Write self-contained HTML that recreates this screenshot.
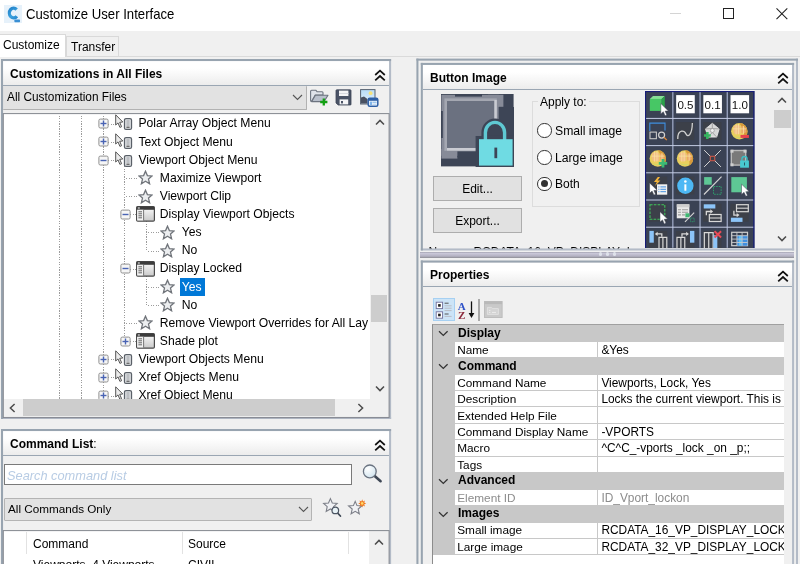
<!DOCTYPE html>
<html><head><meta charset="utf-8"><title>Customize User Interface</title>
<style>
*{box-sizing:border-box;margin:0;padding:0}
html,body{width:800px;height:564px;overflow:hidden;background:#f0f0f0}
body{position:relative;font:12px "Liberation Sans",sans-serif;color:#000}
.a{position:absolute;white-space:pre}
.t{position:absolute;white-space:pre;line-height:14px;height:14px}
.b{font-weight:bold}
.panel{position:absolute;background:#f0f0f0}
.hdr{position:absolute;left:2px;right:2px;top:2px;height:24.8px;background:linear-gradient(#ffffff 30%,#ececec);border-bottom:1px solid #9aa6b3}
.combo{position:absolute;background:#e2e2e2;border:1px solid #b4b4b4;border-radius:1px}
.white{position:absolute;background:#fff}
.sb{position:absolute;background:#f0f0f0}
.thumb{position:absolute;background:#cdcdcd}
.hd{height:1px;background:repeating-linear-gradient(90deg,#9c9c9c 0 0.82px,transparent 0.82px 1.64px)}
.vd{width:1px;background:repeating-linear-gradient(180deg,#9c9c9c 0 0.82px,transparent 0.82px 1.64px)}
.chev{position:absolute}
.radio{width:14.4px;height:14.4px;border-radius:50%;border:1px solid #333;background:#fff}
.radio i{position:absolute;left:2.7px;top:2.7px;width:7px;height:7px;border-radius:50%;background:#333}
</style></head><body>
<!-- title bar -->
<div class="a" style="left:0;top:0;width:800px;height:31px;background:#fff"></div>
<div class="t" style="left:26px;top:6.1px;font-size:14.3px;line-height:16px;height:16px;color:#000;transform-origin:0 0;transform:scaleX(0.92)">Customize User Interface</div>
<!-- app icon -->
<svg class="a" style="left:4px;top:4.5px" width="18" height="18" viewBox="0 0 18 18">
<defs><linearGradient id="cg" gradientUnits="userSpaceOnUse" x1="3" y1="1" x2="14" y2="15"><stop offset="0" stop-color="#1a78c2"/><stop offset="0.6" stop-color="#3aa0de"/><stop offset="1" stop-color="#1e7fc8"/></linearGradient></defs>
<rect width="18" height="18" fill="#e6f1fa"/>
<path d="M12.6 4.6 A4.2 4.9 0 1 0 12.8 11.2" stroke="url(#cg)" stroke-width="3.3" fill="none"/>
<rect x="10.4" y="14.6" width="5.6" height="2.6" rx="0.6" fill="#3a8fd4"/>
</svg>
<!-- window controls -->
<div class="a" style="left:670px;top:12.7px;width:11px;height:1px;background:#d4d4d4"></div>
<div class="a" style="left:723px;top:8.2px;width:10.8px;height:10.6px;border:1px solid #222"></div>
<svg class="a" style="left:776px;top:8px" width="12" height="12" viewBox="0 0 12 12"><path d="M0.5 0.4 L11.3 11.2 M11.3 0.4 L0.5 11.2" stroke="#222" stroke-width="1.05"/></svg>
<!-- tabs -->
<div class="a" style="left:0;top:56px;width:800px;height:1px;background:#dadada"></div>
<div class="a" style="left:66px;top:36px;width:53px;height:20px;background:#f0f0f0;border:1px solid #d9d9d9;border-bottom:none"></div>
<div class="a" style="left:0;top:34px;width:66px;height:23px;background:#fff;border:1px solid #d9d9d9;border-bottom:none;border-left:none"></div>
<div class="t" style="left:3px;top:38px">Customize</div>
<div class="t" style="left:71px;top:40px">Transfer</div>

<!-- LEFT PANEL 1 -->
<div class="panel" id="p1" style="left:1px;top:59px;width:390.1px;height:360px">
  <div class="hdr"></div>
</div>
<div class="t b" style="left:10px;top:67px">Customizations in All Files</div>
<div class="combo" style="left:3.4px;top:86px;width:303.4px;height:23.6px;border-left:none;border-top:none;border-color:#b2b2b2"></div>
<div class="t" style="left:7px;top:90px;font-size:11.85px">All Customization Files</div>
<div class="white" id="tree" style="left:4px;top:114px;width:366.4px;height:284.6px;overflow:hidden"><div class="a" style="left:-4px;top:-114px;width:800px;height:564px">
<div class="a vd" style="left:59.1px;top:113.0px;height:286.0px"></div>
<div class="a vd" style="left:81.0px;top:113.0px;height:286.0px"></div>
<div class="a vd" style="left:102.7px;top:113.0px;height:286.0px"></div>
<div class="a vd" style="left:124.1px;top:165.9px;height:175.3px"></div>
<div class="a vd" style="left:146.1px;top:221.2px;height:29.3px"></div>
<div class="a vd" style="left:146.1px;top:275.6px;height:29.3px"></div>
<div class="a hd" style="left:108.2px;top:123.6px;width:6.0px"></div>
<svg class="a" style="left:114.8px;top:114.4px" width="19" height="17" viewBox="0 0 19 17"><path d="M0.7 0.8 L0.7 11 L3 8.9 L4.9 13.4 L6.6 12.7 L4.7 8.3 L7.8 8 Z" fill="#ececec" stroke="#555" stroke-width="1" stroke-linejoin="round"/><rect x="9.5" y="4.6" width="7" height="10.8" rx="1.5" fill="#e6e8ea" stroke="#5a6068" stroke-width="1.3"/><path d="M11.4 7h3.2M11.4 9h3.2M11.4 11h3.2" stroke="#7d838b" stroke-width="0.8"/><path d="M11.4 13.2h3.2" stroke="#444" stroke-width="1.1"/></svg>
<svg class="a" style="left:97.7px;top:118.2px" width="11" height="11" viewBox="0 0 11 11"><rect x="0.9" y="1.1" width="9.2" height="8.9" rx="1.4" fill="#f6f6f6" stroke="#909090" stroke-width="1"/><path d="M2.5 5.5h6" stroke="#4a64b4" stroke-width="1.4"/><path d="M5.5 2.5v6" stroke="#4a64b4" stroke-width="1.4"/></svg>
<div class="t" style="left:138.4px;top:116.4px;font-size:12.15px">Polar Array Object Menu</div>
<div class="a hd" style="left:108.2px;top:141.7px;width:6.0px"></div>
<svg class="a" style="left:114.8px;top:132.5px" width="19" height="17" viewBox="0 0 19 17"><path d="M0.7 0.8 L0.7 11 L3 8.9 L4.9 13.4 L6.6 12.7 L4.7 8.3 L7.8 8 Z" fill="#ececec" stroke="#555" stroke-width="1" stroke-linejoin="round"/><rect x="9.5" y="4.6" width="7" height="10.8" rx="1.5" fill="#e6e8ea" stroke="#5a6068" stroke-width="1.3"/><path d="M11.4 7h3.2M11.4 9h3.2M11.4 11h3.2" stroke="#7d838b" stroke-width="0.8"/><path d="M11.4 13.2h3.2" stroke="#444" stroke-width="1.1"/></svg>
<svg class="a" style="left:97.7px;top:136.3px" width="11" height="11" viewBox="0 0 11 11"><rect x="0.9" y="1.1" width="9.2" height="8.9" rx="1.4" fill="#f6f6f6" stroke="#909090" stroke-width="1"/><path d="M2.5 5.5h6" stroke="#4a64b4" stroke-width="1.4"/><path d="M5.5 2.5v6" stroke="#4a64b4" stroke-width="1.4"/></svg>
<div class="t" style="left:138.4px;top:134.5px;font-size:12.15px">Text Object Menu</div>
<div class="a hd" style="left:108.2px;top:159.9px;width:6.0px"></div>
<svg class="a" style="left:114.8px;top:150.7px" width="19" height="17" viewBox="0 0 19 17"><path d="M0.7 0.8 L0.7 11 L3 8.9 L4.9 13.4 L6.6 12.7 L4.7 8.3 L7.8 8 Z" fill="#ececec" stroke="#555" stroke-width="1" stroke-linejoin="round"/><rect x="9.5" y="4.6" width="7" height="10.8" rx="1.5" fill="#e6e8ea" stroke="#5a6068" stroke-width="1.3"/><path d="M11.4 7h3.2M11.4 9h3.2M11.4 11h3.2" stroke="#7d838b" stroke-width="0.8"/><path d="M11.4 13.2h3.2" stroke="#444" stroke-width="1.1"/></svg>
<svg class="a" style="left:97.7px;top:154.5px" width="11" height="11" viewBox="0 0 11 11"><rect x="0.9" y="1.1" width="9.2" height="8.9" rx="1.4" fill="#f6f6f6" stroke="#909090" stroke-width="1"/><path d="M2.5 5.5h6" stroke="#4a64b4" stroke-width="1.4"/></svg>
<div class="t" style="left:138.4px;top:152.7px;font-size:12.15px">Viewport Object Menu</div>
<div class="a hd" style="left:125.6px;top:178.0px;width:11.0px"></div>
<svg class="a" style="left:138.2px;top:170.4px" width="15" height="15" viewBox="0 0 15 15"><path d="M7.5 1.2 L9.4 5.6 L14.1 6 L10.5 9.1 L11.6 13.8 L7.5 11.3 L3.4 13.8 L4.5 9.1 L0.9 6 L5.6 5.6 Z" fill="#eceef0" stroke="#70747a" stroke-width="1.3" stroke-linejoin="miter"/></svg>
<div class="t" style="left:159.8px;top:170.8px;font-size:12.15px">Maximize Viewport</div>
<div class="a hd" style="left:125.6px;top:196.1px;width:11.0px"></div>
<svg class="a" style="left:138.2px;top:188.5px" width="15" height="15" viewBox="0 0 15 15"><path d="M7.5 1.2 L9.4 5.6 L14.1 6 L10.5 9.1 L11.6 13.8 L7.5 11.3 L3.4 13.8 L4.5 9.1 L0.9 6 L5.6 5.6 Z" fill="#eceef0" stroke="#70747a" stroke-width="1.3" stroke-linejoin="miter"/></svg>
<div class="t" style="left:159.8px;top:188.9px;font-size:12.15px">Viewport Clip</div>
<div class="a hd" style="left:129.6px;top:214.2px;width:7.0px"></div>
<svg class="a" style="left:136.2px;top:206.2px" width="19" height="16" viewBox="0 0 19 16"><defs><linearGradient id="sg5" x1="0" y1="0" x2="0" y2="1"><stop offset="0" stop-color="#fdfdfd"/><stop offset="1" stop-color="#c9c9c9"/></linearGradient></defs><rect x="0.6" y="0.6" width="17.8" height="14.6" rx="1.2" fill="url(#sg5)" stroke="#4a4a4a" stroke-width="1.2"/><rect x="0.6" y="0.6" width="17.8" height="3.2" fill="#3c3c3c"/><rect x="1.2" y="3.8" width="6.2" height="10.6" fill="#f2f2f2"/><path d="M7.6 3.8v10.8" stroke="#6a6a6a" stroke-width="0.9"/><path d="M2.4 5.8h3.6M2.4 7.8h3.6M2.4 9.8h3.6M2.4 11.8h3.6" stroke="#555" stroke-width="0.9"/><rect x="1.8" y="1.4" width="2" height="1.2" fill="#ddd"/></svg>
<svg class="a" style="left:119.5px;top:208.8px" width="11" height="11" viewBox="0 0 11 11"><rect x="0.9" y="1.1" width="9.2" height="8.9" rx="1.4" fill="#f6f6f6" stroke="#909090" stroke-width="1"/><path d="M2.5 5.5h6" stroke="#4a64b4" stroke-width="1.4"/></svg>
<div class="t" style="left:159.8px;top:207.1px;font-size:12.15px">Display Viewport Objects</div>
<div class="a hd" style="left:147.6px;top:232.4px;width:11.0px"></div>
<svg class="a" style="left:160.2px;top:224.8px" width="15" height="15" viewBox="0 0 15 15"><path d="M7.5 1.2 L9.4 5.6 L14.1 6 L10.5 9.1 L11.6 13.8 L7.5 11.3 L3.4 13.8 L4.5 9.1 L0.9 6 L5.6 5.6 Z" fill="#eceef0" stroke="#70747a" stroke-width="1.3" stroke-linejoin="miter"/></svg>
<div class="t" style="left:181.8px;top:225.2px;font-size:12.15px">Yes</div>
<div class="a hd" style="left:147.6px;top:250.5px;width:11.0px"></div>
<svg class="a" style="left:160.2px;top:242.9px" width="15" height="15" viewBox="0 0 15 15"><path d="M7.5 1.2 L9.4 5.6 L14.1 6 L10.5 9.1 L11.6 13.8 L7.5 11.3 L3.4 13.8 L4.5 9.1 L0.9 6 L5.6 5.6 Z" fill="#eceef0" stroke="#70747a" stroke-width="1.3" stroke-linejoin="miter"/></svg>
<div class="t" style="left:181.8px;top:243.3px;font-size:12.15px">No</div>
<div class="a hd" style="left:129.6px;top:268.6px;width:7.0px"></div>
<svg class="a" style="left:136.2px;top:260.6px" width="19" height="16" viewBox="0 0 19 16"><defs><linearGradient id="sg8" x1="0" y1="0" x2="0" y2="1"><stop offset="0" stop-color="#fdfdfd"/><stop offset="1" stop-color="#c9c9c9"/></linearGradient></defs><rect x="0.6" y="0.6" width="17.8" height="14.6" rx="1.2" fill="url(#sg8)" stroke="#4a4a4a" stroke-width="1.2"/><rect x="0.6" y="0.6" width="17.8" height="3.2" fill="#3c3c3c"/><rect x="1.2" y="3.8" width="6.2" height="10.6" fill="#f2f2f2"/><path d="M7.6 3.8v10.8" stroke="#6a6a6a" stroke-width="0.9"/><path d="M2.4 5.8h3.6M2.4 7.8h3.6M2.4 9.8h3.6M2.4 11.8h3.6" stroke="#555" stroke-width="0.9"/><rect x="1.8" y="1.4" width="2" height="1.2" fill="#ddd"/></svg>
<svg class="a" style="left:119.5px;top:263.2px" width="11" height="11" viewBox="0 0 11 11"><rect x="0.9" y="1.1" width="9.2" height="8.9" rx="1.4" fill="#f6f6f6" stroke="#909090" stroke-width="1"/><path d="M2.5 5.5h6" stroke="#4a64b4" stroke-width="1.4"/></svg>
<div class="t" style="left:159.8px;top:261.4px;font-size:12.15px">Display Locked</div>
<div class="a hd" style="left:147.6px;top:286.8px;width:11.0px"></div>
<svg class="a" style="left:160.2px;top:279.2px" width="15" height="15" viewBox="0 0 15 15"><path d="M7.5 1.2 L9.4 5.6 L14.1 6 L10.5 9.1 L11.6 13.8 L7.5 11.3 L3.4 13.8 L4.5 9.1 L0.9 6 L5.6 5.6 Z" fill="#eceef0" stroke="#70747a" stroke-width="1.3" stroke-linejoin="miter"/></svg>
<div class="a" style="left:179.9px;top:277.5px;width:25.2px;height:18.6px;background:#0078d7"></div>
<div class="t" style="left:181.8px;top:279.6px;color:#fff;font-size:12.15px">Yes</div>
<div class="a hd" style="left:147.6px;top:304.9px;width:11.0px"></div>
<svg class="a" style="left:160.2px;top:297.3px" width="15" height="15" viewBox="0 0 15 15"><path d="M7.5 1.2 L9.4 5.6 L14.1 6 L10.5 9.1 L11.6 13.8 L7.5 11.3 L3.4 13.8 L4.5 9.1 L0.9 6 L5.6 5.6 Z" fill="#eceef0" stroke="#70747a" stroke-width="1.3" stroke-linejoin="miter"/></svg>
<div class="t" style="left:181.8px;top:297.7px;font-size:12.15px">No</div>
<div class="a hd" style="left:125.6px;top:323.0px;width:11.0px"></div>
<svg class="a" style="left:138.2px;top:315.4px" width="15" height="15" viewBox="0 0 15 15"><path d="M7.5 1.2 L9.4 5.6 L14.1 6 L10.5 9.1 L11.6 13.8 L7.5 11.3 L3.4 13.8 L4.5 9.1 L0.9 6 L5.6 5.6 Z" fill="#eceef0" stroke="#70747a" stroke-width="1.3" stroke-linejoin="miter"/></svg>
<div class="t" style="left:159.8px;top:315.8px;font-size:12.15px">Remove Viewport Overrides for All Lay</div>
<div class="a hd" style="left:129.6px;top:341.2px;width:7.0px"></div>
<svg class="a" style="left:136.2px;top:333.2px" width="19" height="16" viewBox="0 0 19 16"><defs><linearGradient id="sg12" x1="0" y1="0" x2="0" y2="1"><stop offset="0" stop-color="#fdfdfd"/><stop offset="1" stop-color="#c9c9c9"/></linearGradient></defs><rect x="0.6" y="0.6" width="17.8" height="14.6" rx="1.2" fill="url(#sg12)" stroke="#4a4a4a" stroke-width="1.2"/><rect x="0.6" y="0.6" width="17.8" height="3.2" fill="#3c3c3c"/><rect x="1.2" y="3.8" width="6.2" height="10.6" fill="#f2f2f2"/><path d="M7.6 3.8v10.8" stroke="#6a6a6a" stroke-width="0.9"/><path d="M2.4 5.8h3.6M2.4 7.8h3.6M2.4 9.8h3.6M2.4 11.8h3.6" stroke="#555" stroke-width="0.9"/><rect x="1.8" y="1.4" width="2" height="1.2" fill="#ddd"/></svg>
<svg class="a" style="left:119.5px;top:335.8px" width="11" height="11" viewBox="0 0 11 11"><rect x="0.9" y="1.1" width="9.2" height="8.9" rx="1.4" fill="#f6f6f6" stroke="#909090" stroke-width="1"/><path d="M2.5 5.5h6" stroke="#4a64b4" stroke-width="1.4"/><path d="M5.5 2.5v6" stroke="#4a64b4" stroke-width="1.4"/></svg>
<div class="t" style="left:159.8px;top:334.0px;font-size:12.15px">Shade plot</div>
<div class="a hd" style="left:108.2px;top:359.3px;width:6.0px"></div>
<svg class="a" style="left:114.8px;top:350.1px" width="19" height="17" viewBox="0 0 19 17"><path d="M0.7 0.8 L0.7 11 L3 8.9 L4.9 13.4 L6.6 12.7 L4.7 8.3 L7.8 8 Z" fill="#ececec" stroke="#555" stroke-width="1" stroke-linejoin="round"/><rect x="9.5" y="4.6" width="7" height="10.8" rx="1.5" fill="#e6e8ea" stroke="#5a6068" stroke-width="1.3"/><path d="M11.4 7h3.2M11.4 9h3.2M11.4 11h3.2" stroke="#7d838b" stroke-width="0.8"/><path d="M11.4 13.2h3.2" stroke="#444" stroke-width="1.1"/></svg>
<svg class="a" style="left:97.7px;top:353.9px" width="11" height="11" viewBox="0 0 11 11"><rect x="0.9" y="1.1" width="9.2" height="8.9" rx="1.4" fill="#f6f6f6" stroke="#909090" stroke-width="1"/><path d="M2.5 5.5h6" stroke="#4a64b4" stroke-width="1.4"/><path d="M5.5 2.5v6" stroke="#4a64b4" stroke-width="1.4"/></svg>
<div class="t" style="left:138.4px;top:352.1px;font-size:12.15px">Viewport Objects Menu</div>
<div class="a hd" style="left:108.2px;top:377.4px;width:6.0px"></div>
<svg class="a" style="left:114.8px;top:368.2px" width="19" height="17" viewBox="0 0 19 17"><path d="M0.7 0.8 L0.7 11 L3 8.9 L4.9 13.4 L6.6 12.7 L4.7 8.3 L7.8 8 Z" fill="#ececec" stroke="#555" stroke-width="1" stroke-linejoin="round"/><rect x="9.5" y="4.6" width="7" height="10.8" rx="1.5" fill="#e6e8ea" stroke="#5a6068" stroke-width="1.3"/><path d="M11.4 7h3.2M11.4 9h3.2M11.4 11h3.2" stroke="#7d838b" stroke-width="0.8"/><path d="M11.4 13.2h3.2" stroke="#444" stroke-width="1.1"/></svg>
<svg class="a" style="left:97.7px;top:372.0px" width="11" height="11" viewBox="0 0 11 11"><rect x="0.9" y="1.1" width="9.2" height="8.9" rx="1.4" fill="#f6f6f6" stroke="#909090" stroke-width="1"/><path d="M2.5 5.5h6" stroke="#4a64b4" stroke-width="1.4"/><path d="M5.5 2.5v6" stroke="#4a64b4" stroke-width="1.4"/></svg>
<div class="t" style="left:138.4px;top:370.2px;font-size:12.15px">Xref Objects Menu</div>
<div class="a hd" style="left:108.2px;top:395.5px;width:6.0px"></div>
<svg class="a" style="left:114.8px;top:386.3px" width="19" height="17" viewBox="0 0 19 17"><path d="M0.7 0.8 L0.7 11 L3 8.9 L4.9 13.4 L6.6 12.7 L4.7 8.3 L7.8 8 Z" fill="#ececec" stroke="#555" stroke-width="1" stroke-linejoin="round"/><rect x="9.5" y="4.6" width="7" height="10.8" rx="1.5" fill="#e6e8ea" stroke="#5a6068" stroke-width="1.3"/><path d="M11.4 7h3.2M11.4 9h3.2M11.4 11h3.2" stroke="#7d838b" stroke-width="0.8"/><path d="M11.4 13.2h3.2" stroke="#444" stroke-width="1.1"/></svg>
<svg class="a" style="left:97.7px;top:390.1px" width="11" height="11" viewBox="0 0 11 11"><rect x="0.9" y="1.1" width="9.2" height="8.9" rx="1.4" fill="#f6f6f6" stroke="#909090" stroke-width="1"/><path d="M2.5 5.5h6" stroke="#4a64b4" stroke-width="1.4"/><path d="M5.5 2.5v6" stroke="#4a64b4" stroke-width="1.4"/></svg>
<div class="t" style="left:138.4px;top:388.3px;font-size:12.15px">Xref Object Menu</div>
</div></div>
<div class="sb" style="left:370.4px;top:114px;width:18.2px;height:284.6px"></div>
<div class="sb" style="left:4px;top:398.6px;width:384.6px;height:18.4px"></div>
<div class="thumb" style="left:23px;top:399.4px;width:311.8px;height:16.6px"></div>
<div class="thumb" style="left:371.2px;top:294.9px;width:16.2px;height:26.9px"></div>

<!-- LEFT PANEL 2 -->
<div class="panel" id="p2" style="left:1px;top:429px;width:390.1px;height:140px">
  <div class="hdr"></div>
</div>
<div class="t b" style="left:10px;top:437px">Command List<span style="font-weight:normal">:</span></div>
<div class="white" style="left:4px;top:464px;width:348px;height:21px;border:1px solid #7a7a7a"></div>
<div class="t" style="left:7px;top:469px;font-style:italic;color:#b8cce4;font-size:12.8px">Search command list</div>
<div class="combo" style="left:4px;top:498px;width:308px;height:23px"></div>
<div class="t" style="left:8px;top:502.3px;font-size:11.7px">All Commands Only</div>
<div class="white" style="left:4px;top:531px;width:365px;height:40px"></div>
<div class="sb" style="left:369px;top:531px;width:19.6px;height:40px"></div>
<div class="t" style="left:33px;top:537px">Command</div>
<div class="t" style="left:188px;top:537px">Source</div>
<div class="t" style="left:33px;top:557.6px">Viewports, 4 Viewports</div>
<div class="t" style="left:188px;top:557.6px">CIVIL</div>


<!-- header chevrons -->
<svg class="a" style="left:374px;top:68.5px" width="12" height="13" viewBox="0 0 12 13"><path d="M1.2 6 L6 1.6 L10.8 6 M1.2 11.4 L6 7 L10.8 11.4" fill="none" stroke="#111" stroke-width="1.7"/></svg>
<svg class="a" style="left:374px;top:438.5px" width="12" height="13" viewBox="0 0 12 13"><path d="M1.2 6 L6 1.6 L10.8 6 M1.2 11.4 L6 7 L10.8 11.4" fill="none" stroke="#111" stroke-width="1.7"/></svg>
<!-- combo arrows -->
<svg class="a" style="left:292px;top:94px" width="11" height="7" viewBox="0 0 11 7"><path d="M1 1 L5.5 5.5 L10 1" fill="none" stroke="#555" stroke-width="1.1"/></svg>
<svg class="a" style="left:297.5px;top:505.5px" width="11" height="7" viewBox="0 0 11 7"><path d="M1 1 L5.5 5.5 L10 1" fill="none" stroke="#555" stroke-width="1.1"/></svg>
<!-- open folder + -->
<svg class="a" style="left:309px;top:88px" width="21" height="20" viewBox="0 0 21 20">
<path d="M1.6 3.2 Q1.6 2.2 2.6 2.2 L6.8 2.2 L8.2 3.8 L13.2 3.8 Q14 3.8 14 4.8 L14 7 L6.2 7 L2.6 13.4 Q1.6 13.4 1.6 12.4 Z" fill="#dfe3ea" stroke="#6d7480" stroke-width="1.1" stroke-linejoin="round"/>
<path d="M6.4 7.2 L19 7.2 L15 13.6 L2.6 13.6 Z" fill="#b9c0cc" stroke="#6d7480" stroke-width="1.1" stroke-linejoin="round"/>
<path d="M14.8 10.4v7.2M11.2 14h7.2" stroke="#12a012" stroke-width="2.3"/>
</svg>
<!-- save -->
<svg class="a" style="left:335px;top:89.2px" width="17" height="17" viewBox="0 0 17 17">
<path d="M1 1.6 Q1 0.8 1.8 0.8 L15.2 0.8 Q16 0.8 16 1.6 L16 15.4 Q16 16 15.2 16 L3.2 16 L1 14 Z" fill="#4a5366" stroke="#3d4557" stroke-width="0.8"/>
<rect x="4" y="1.6" width="9.4" height="5.4" fill="#f4f4f6"/>
<rect x="4" y="4" width="9.4" height="1" fill="#d8dae0"/>
<rect x="4.6" y="10.4" width="8.6" height="5" fill="#f4f4f6"/>
<rect x="6" y="12" width="2" height="2.4" fill="#4a5366"/>
</svg>
<!-- image + window -->
<svg class="a" style="left:359.5px;top:88.5px" width="20" height="19" viewBox="0 0 20 19">
<defs><linearGradient id="sky" x1="0" y1="0" x2="0" y2="1"><stop offset="0" stop-color="#b7dcf7"/><stop offset="1" stop-color="#e6f2fb"/></linearGradient></defs>
<rect x="0.6" y="0.6" width="14.4" height="14.4" fill="url(#sky)" stroke="#56606f" stroke-width="1"/>
<circle cx="10.6" cy="4.2" r="1.9" fill="#f6e27a"/>
<path d="M1 8.4 L4 7.6 L7.4 10 L7.4 14.6 L1 14.6 Z" fill="#4a5161"/>
<path d="M7.4 10.4 L10 9.6 L10 14.6 L7.4 14.6 Z" fill="#8a93a3"/>
<rect x="8.2" y="9.2" width="9.6" height="8" rx="1.5" fill="#f4f8fc" stroke="#2d5fa6" stroke-width="1.5"/>
<rect x="8.6" y="9.6" width="8.8" height="2.2" fill="#2d5fa6"/>
<rect x="9.8" y="12.6" width="2.2" height="3.6" fill="#7fb4ea"/><rect x="12.4" y="12.6" width="4.2" height="1.5" fill="#9cc6ee"/><rect x="12.4" y="14.6" width="4.2" height="1.5" fill="#c5ddf4"/>
</svg>
<!-- tree scroll arrows -->
<svg class="a" style="left:375px;top:119px" width="10" height="7" viewBox="0 0 10 7"><path d="M1 5.6 L5 1.4 L9 5.6" fill="none" stroke="#4c4c4c" stroke-width="1.5"/></svg>
<svg class="a" style="left:375px;top:385px" width="10" height="7" viewBox="0 0 10 7"><path d="M1 1.4 L5 5.6 L9 1.4" fill="none" stroke="#4c4c4c" stroke-width="1.5"/></svg>
<svg class="a" style="left:9px;top:402.5px" width="7" height="10" viewBox="0 0 7 10"><path d="M5.6 1 L1.4 5 L5.6 9" fill="none" stroke="#4c4c4c" stroke-width="1.5"/></svg>
<svg class="a" style="left:356.5px;top:402.5px" width="7" height="10" viewBox="0 0 7 10"><path d="M1.4 1 L5.6 5 L1.4 9" fill="none" stroke="#4c4c4c" stroke-width="1.5"/></svg>
<!-- list scroll arrow -->
<svg class="a" style="left:373.5px;top:538.5px" width="10" height="7" viewBox="0 0 10 7"><path d="M1 5.6 L5 1.4 L9 5.6" fill="none" stroke="#4c4c4c" stroke-width="1.5"/></svg>
<!-- magnifier -->
<svg class="a" style="left:361px;top:462px" width="22" height="22" viewBox="0 0 22 22">
<defs><radialGradient id="mg" cx="0.35" cy="0.3" r="0.8"><stop offset="0" stop-color="#ffffff"/><stop offset="1" stop-color="#cfe3ee"/></radialGradient></defs>
<path d="M13.4 13.8 L19.6 19.2" stroke="#3f4856" stroke-width="2.6" stroke-linecap="round"/>
<circle cx="8.8" cy="9.4" r="6.4" fill="url(#mg)" stroke="#6a7380" stroke-width="1.3"/>
</svg>
<!-- star search -->
<svg class="a" style="left:322px;top:497px" width="20" height="21" viewBox="0 0 20 21">
<path d="M8.4 1.6 L10.3 6 L15.2 6.5 L11.6 9.7 L12.6 14.5 L8.4 12 L4.2 14.5 L5.2 9.7 L1.6 6.5 L6.5 6 Z" fill="#f0f1f4" stroke="#7c7f88" stroke-width="1.1"/>
<path d="M15.6 16 L18.4 19" stroke="#3f4856" stroke-width="1.8" stroke-linecap="round"/>
<circle cx="13.3" cy="13.4" r="3.3" fill="#e8f2f6" stroke="#4c5562" stroke-width="1.2"/>
</svg>
<!-- star new -->
<svg class="a" style="left:346.5px;top:498px" width="20" height="18" viewBox="0 0 20 18">
<path d="M8.2 3.4 L10 7.6 L14.8 8 L11.2 11 L12.3 15.8 L8.2 13.3 L4.1 15.8 L5.2 11 L1.6 8 L6.4 7.6 Z" fill="#f0f1f4" stroke="#7c7f88" stroke-width="1.1"/>
<path d="M15.2 1.2 L16 3.4 L18 2.4 L17.2 4.6 L19.2 5.4 L17.2 6.2 L18 8.4 L16 7.4 L15.2 9.6 L14.4 7.4 L12.4 8.4 L13.2 6.2 L11.2 5.4 L13.2 4.6 L12.4 2.4 L14.4 3.4 Z" fill="#f0781e"/>
<circle cx="15.2" cy="5.4" r="1.3" fill="#ffd86a"/>
</svg>
<!-- list header separators -->
<div class="a" style="left:26px;top:532px;width:1px;height:22px;background:#e2e2e2"></div>
<div class="a" style="left:182px;top:532px;width:1px;height:22px;background:#e2e2e2"></div>
<div class="a" style="left:348px;top:532px;width:1px;height:22px;background:#e2e2e2"></div>

<!-- RIGHT OUTER -->
<div class="panel" style="left:416.4px;top:58.6px;width:381.6px;height:520px"></div>
<div class="panel" id="p3" style="left:420.8px;top:62.9px;width:373.3px;height:187.6px">
  <div class="hdr"></div>
</div>
<div class="t b" style="left:430px;top:71px">Button Image</div>
<div class="a" style="left:419.6px;top:251.5px;width:374.4px;height:6.3px;background:linear-gradient(#9a9aa6 0,#cbc9da 18%,#b3b1c1 70%,#8d8d93 100%)"></div>
<div class="panel" id="p4" style="left:420.8px;top:260.5px;width:373.3px;height:320px">
  <div class="hdr"></div>
</div>
<div class="t b" style="left:430px;top:267.6px">Properties</div>
<!-- preview image -->
<svg class="a" style="left:441.3px;top:94.3px" width="72.6" height="72.4" viewBox="0 0 72.6 72.4">
<rect width="72.6" height="72.4" fill="#3d4556"/>
<rect x="0.4" y="0.8" width="57.4" height="61" fill="#878b98"/>
<rect x="14" y="0" width="27" height="2.6" fill="#3d4556"/>
<rect x="0" y="17" width="1.8" height="27" fill="#3d4556"/>
<rect x="47" y="0.8" width="15.4" height="12" fill="#878b98"/>
<rect x="0.4" y="55" width="16" height="9.6" fill="#878b98"/>
<rect x="16.4" y="57.4" width="42" height="6" fill="#3d4556"/>
<rect x="3.4" y="4.4" width="52.4" height="52.4" fill="#a4a7b1"/>
<rect x="6" y="7" width="47.4" height="47" fill="#6b7180"/>
<rect x="53.4" y="6" width="2.4" height="50" fill="#c9cbd2"/>
<rect x="6" y="54" width="49.8" height="2.6" fill="#c9cbd2"/>
<rect x="57.8" y="13" width="16" height="50" fill="#3d4556"/>
<path d="M44.4 50 L44.4 38.6 A9.6 10.2 0 0 1 63.6 38.6 L63.6 50" fill="#3d4556" stroke="#3d4556" stroke-width="8"/>
<rect x="34.6" y="42" width="40" height="32" fill="#3d4556"/>
<path d="M44.4 47 L44.4 38.6 A9.6 10.2 0 0 1 63.6 38.6 L63.6 47" fill="none" stroke="#5fc9d3" stroke-width="3.4"/>
<rect x="38" y="45.2" width="33.6" height="26.4" fill="#6fdbe3"/>
<rect x="53.4" y="53.6" width="2.8" height="10.6" fill="#3d4556"/>
</svg>
<!-- Edit / Export buttons -->
<div class="a" style="left:433px;top:176px;width:89px;height:25px;background:#e1e1e1;border:1px solid #adadad"></div>
<div class="t" style="left:433px;top:181.5px;width:89px;text-align:center">Edit...</div>
<div class="a" style="left:433px;top:207.6px;width:89px;height:25px;background:#e1e1e1;border:1px solid #adadad"></div>
<div class="t" style="left:433px;top:214px;width:89px;text-align:center">Export...</div>
<!-- group box -->
<div class="a" style="left:532px;top:101px;width:108px;height:105.5px;border:1px solid #dcdcdc"></div>
<div class="t" style="left:538px;top:94.5px;background:#f0f0f0;padding:0 2px">Apply to:</div>
<div class="a radio" style="left:537.4px;top:123.4px"></div>
<div class="t" style="left:555px;top:123.5px;font-size:12.2px">Small image</div>
<div class="a radio" style="left:537.4px;top:150.2px"></div>
<div class="t" style="left:555px;top:150.5px;font-size:12.2px">Large image</div>
<div class="a radio" style="left:537.4px;top:176.6px"><i></i></div>
<div class="t" style="left:555px;top:177px">Both</div>
<!-- clipped "Name:" line -->
<div class="a" style="left:423px;top:244px;width:222px;height:4.9px;overflow:hidden"><div class="t" style="left:5.6px;top:0.5px">Name:</div><div class="t" style="left:50.4px;top:0.5px">RCDATA_16_VP_DISPLAY_L</div></div>
<!-- scrollbar of icon list -->
<div class="thumb" style="left:773.6px;top:110px;width:17.4px;height:18px"></div>
<svg class="a" style="left:777.3px;top:96.6px" width="10" height="7" viewBox="0 0 10 7"><path d="M1 5.6 L5 1.4 L9 5.6" fill="none" stroke="#4c4c4c" stroke-width="1.5"/></svg>
<svg class="a" style="left:777.3px;top:234.6px" width="10" height="7" viewBox="0 0 10 7"><path d="M1 1.4 L5 5.6 L9 1.4" fill="none" stroke="#4c4c4c" stroke-width="1.5"/></svg>
<!-- splitter dots -->
<div class="a" style="left:598.6px;top:252.3px;width:3.6px;height:3.6px;border-radius:50%;background:#dfe2ea"></div>
<div class="a" style="left:605.6px;top:252.3px;width:3.6px;height:3.6px;border-radius:50%;background:#dfe2ea"></div>
<div class="a" style="left:612.6px;top:252.3px;width:3.6px;height:3.6px;border-radius:50%;background:#dfe2ea"></div>

<!-- header chevrons right -->
<svg class="a" style="left:777px;top:72.4px" width="12" height="13" viewBox="0 0 12 13"><path d="M1.2 6 L6 1.6 L10.8 6 M1.2 11.4 L6 7 L10.8 11.4" fill="none" stroke="#111" stroke-width="1.7"/></svg>
<svg class="a" style="left:777px;top:270.2px" width="12" height="13" viewBox="0 0 12 13"><path d="M1.2 6 L6 1.6 L10.8 6 M1.2 11.4 L6 7 L10.8 11.4" fill="none" stroke="#111" stroke-width="1.7"/></svg>

<svg class="a" style="left:645.2px;top:91.0px" width="109.4" height="156.8" viewBox="0 0 109.4 156.8">
<rect width="109.4" height="160.8" fill="#3a4254"/>
<rect x="27.37" y="0" width="1" height="156.8" fill="#b9c4e4"/>
<rect x="54.54" y="0" width="1" height="156.8" fill="#b9c4e4"/>
<rect x="81.71" y="0" width="1" height="156.8" fill="#b9c4e4"/>
<rect x="0" y="26.90" width="109.4" height="1" fill="#c4cce4"/>
<rect x="0" y="54.10" width="109.4" height="1" fill="#c4cce4"/>
<rect x="0" y="81.30" width="109.4" height="1" fill="#c4cce4"/>
<rect x="0" y="108.50" width="109.4" height="1" fill="#c4cce4"/>
<rect x="0" y="135.70" width="109.4" height="1" fill="#c4cce4"/>
<g transform="translate(4.40,4.30)"><path d="M0.4 3.6 L3.6 0.6 L15.4 0.6 L12.2 3.6Z" fill="#86e096"/><path d="M12.2 3.6 L15.4 0.6 L15.4 12.6 L12.2 15.6Z" fill="#2aa24a"/><rect x="0.4" y="3.6" width="11.8" height="12" fill="#47c765"/><g transform="translate(11.4,8.2)"><path d="M0 0 L0 10.4 L2.5 8.2 L4.3 12.2 L6 11.4 L4.3 7.6 L7.6 7.4 Z" fill="#fff" stroke="#3a4150" stroke-width="0.5"/></g></g>
<g transform="translate(31.57,4.30)"><rect x="-0.4" y="-0.2" width="18.6" height="18.2" fill="#fff"/><text x="8.9" y="13.4" font-family="Liberation Sans,sans-serif" font-size="11.6" text-anchor="middle" fill="#111">0.5</text></g>
<g transform="translate(58.74,4.30)"><rect x="-0.4" y="-0.2" width="18.6" height="18.2" fill="#fff"/><text x="8.9" y="13.4" font-family="Liberation Sans,sans-serif" font-size="11.6" text-anchor="middle" fill="#111">0.1</text></g>
<g transform="translate(85.91,4.30)"><rect x="-0.4" y="-0.2" width="18.6" height="18.2" fill="#fff"/><text x="8.9" y="13.4" font-family="Liberation Sans,sans-serif" font-size="11.6" text-anchor="middle" fill="#111">1.0</text></g>
<g transform="translate(4.40,31.50)"><path d="M0.4 8.6 V0.6 H15.6 V8" fill="none" stroke="#3f8fe0" stroke-width="1.1"/><rect x="0.6" y="9.6" width="6.4" height="6.6" fill="none" stroke="#c8c8c8" stroke-width="1.1"/><circle cx="12.2" cy="12.6" r="3" fill="none" stroke="#d0d0d0" stroke-width="1.2"/><path d="M14.6 14.8 L17.4 17.6" stroke="#e08a3a" stroke-width="1.3"/></g>
<g transform="translate(31.57,31.50)"><rect x="-0.6" y="-0.4" width="18.4" height="18" fill="#3c4049"/><path d="M1.2 16.6 Q1 9.4 5 8.6 Q8 8.2 9.4 11.4 Q11 14.4 13.2 12 Q15.6 9 15.8 0.6" fill="none" stroke="#cfcfcf" stroke-width="1.3"/></g>
<g transform="translate(58.74,31.50)"><rect x="-0.6" y="-0.4" width="18.4" height="18" fill="#3c4049"/><path d="M8.6 0.8 L15.4 6.4 L13 14.6 L4.2 14.6 L1.8 6.4 Z" fill="#d7d7d7" stroke="#efefef" stroke-width="0.8"/><path d="M8.6 0.8 L8.6 6 M8.6 6 L1.8 6.4 M8.6 6 L15.4 6.4 M8.6 10 L4.2 14.6 M8.6 10 L13 14.6" stroke="#8d8d8d" stroke-width="0.7"/><circle cx="8.6" cy="8" r="2" fill="#efefef" stroke="#888" stroke-width="0.6"/><path d="M3.6 9.6v6.8M0.2 13h6.8" stroke="#36b560" stroke-width="2.6"/></g>
<g transform="translate(85.91,31.50)"><circle cx="8.4" cy="8.8" r="8.2" fill="#e9cf5e"/><path d="M8.4 0.6 A8.2 8.2 0 0 1 16.6 8.8 A8.2 8.2 0 0 1 12 16.2 Q15 10 8.4 0.6Z" fill="#d89a3a"/><path d="M3 3.2 Q8 1.4 9.6 4 L9.6 11 Q6 12.4 3.4 11 Q1.6 7 3 3.2Z" fill="#f3bd86"/><path d="M10.4 4 Q13 3 14.6 5.4 L15.4 9.6 Q13 11.4 10.4 10.6Z" fill="#eda869"/><path d="M5.2 2v10M7.6 1.4v10.4M2 6.4h13.4M12.6 3.4v8" stroke="#f8e7a8" stroke-width="0.7" fill="none"/><path d="M2.2 13.6 Q8 17.4 14.2 13.8 Q9 15.2 2.2 13.6Z" fill="#c9d86a"/><rect x="9.6" y="12.4" width="8.4" height="3" fill="#e8414d"/></g>
<g transform="translate(4.40,58.70)"><circle cx="8.4" cy="8.8" r="8.2" fill="#e9cf5e"/><path d="M8.4 0.6 A8.2 8.2 0 0 1 16.6 8.8 A8.2 8.2 0 0 1 12 16.2 Q15 10 8.4 0.6Z" fill="#d89a3a"/><path d="M3 3.2 Q8 1.4 9.6 4 L9.6 11 Q6 12.4 3.4 11 Q1.6 7 3 3.2Z" fill="#f3bd86"/><path d="M10.4 4 Q13 3 14.6 5.4 L15.4 9.6 Q13 11.4 10.4 10.6Z" fill="#eda869"/><path d="M5.2 2v10M7.6 1.4v10.4M2 6.4h13.4M12.6 3.4v8" stroke="#f8e7a8" stroke-width="0.7" fill="none"/><path d="M2.2 13.6 Q8 17.4 14.2 13.8 Q9 15.2 2.2 13.6Z" fill="#c9d86a"/><path d="M13.6 9.4v8.4M9.4 13.6h8.4" stroke="#3cba74" stroke-width="2.8"/></g>
<g transform="translate(31.57,58.70)"><circle cx="8.4" cy="8.8" r="8.2" fill="#e9cf5e"/><path d="M8.4 0.6 A8.2 8.2 0 0 1 16.6 8.8 A8.2 8.2 0 0 1 12 16.2 Q15 10 8.4 0.6Z" fill="#d89a3a"/><path d="M3 3.2 Q8 1.4 9.6 4 L9.6 11 Q6 12.4 3.4 11 Q1.6 7 3 3.2Z" fill="#f3bd86"/><path d="M10.4 4 Q13 3 14.6 5.4 L15.4 9.6 Q13 11.4 10.4 10.6Z" fill="#eda869"/><path d="M5.2 2v10M7.6 1.4v10.4M2 6.4h13.4M12.6 3.4v8" stroke="#f8e7a8" stroke-width="0.7" fill="none"/><path d="M2.2 13.6 Q8 17.4 14.2 13.8 Q9 15.2 2.2 13.6Z" fill="#c9d86a"/></g>
<g transform="translate(58.74,58.70)"><path d="M0.4 0.4 L17.2 17.2 M17.2 0.4 L0.4 17.2" stroke="#d6d6d6" stroke-width="1"/><rect x="6.6" y="6.6" width="4.4" height="4.4" fill="#3c4049" stroke="#c8584a" stroke-width="1.1"/></g>
<g transform="translate(85.91,58.70)"><rect x="0.4" y="0.8" width="14.4" height="14.6" fill="#7a7a7a" stroke="#b9b9b9" stroke-width="1.4"/><rect x="-0.4" y="0" width="3" height="3" fill="#cfcfcf"/><rect x="12.6" y="0" width="3" height="3" fill="#cfcfcf"/><rect x="-0.4" y="13.6" width="3" height="3" fill="#cfcfcf"/><path d="M11 11.4 V9.4 A2.6 2.6 0 0 1 16.2 9.4 V11.4" fill="none" stroke="#3bbfc6" stroke-width="1.3"/><rect x="9.2" y="10.8" width="8.8" height="7.2" fill="#48c9d0"/><rect x="13.1" y="12.8" width="1" height="3" fill="#2a5a66"/></g>
<g transform="translate(4.40,85.90)"><rect x="-0.6" y="-0.4" width="18.4" height="18" fill="#3c4049"/><path d="M8.4 0 L4.6 5 L7.4 5 L5.6 9 L11 3.6 L8.2 3.6 L10.6 0Z" fill="#f3b43a"/><rect x="7.6" y="7.4" width="10.2" height="10.4" fill="#f2f2f2"/><path d="M9 10h1M11 10h5.6M9 12.4h1M11 12.4h5.6M9 14.8h1M11 14.8h5.6" stroke="#3f8fe0" stroke-width="1"/><g transform="translate(0.2,6)"><path d="M0 0 L0 10.4 L2.5 8.2 L4.3 12.2 L6 11.4 L4.3 7.6 L7.6 7.4 Z" fill="#fff" stroke="#3a4150" stroke-width="0.5"/></g></g>
<g transform="translate(31.57,85.90)"><rect x="-0.6" y="-0.4" width="18.4" height="18" fill="#3c4049"/><circle cx="8.8" cy="8.8" r="8.2" fill="#4db8f5"/><rect x="7.8" y="7.4" width="2" height="6.4" fill="#fff"/><circle cx="8.8" cy="4.6" r="1.3" fill="#fff"/></g>
<g transform="translate(58.74,85.90)"><rect x="0.4" y="0.2" width="7.6" height="7.6" fill="#5ec795"/><rect x="9.8" y="9.6" width="7.6" height="7.8" fill="none" stroke="#2f9c6c" stroke-width="1" stroke-dasharray="1.6 1"/><path d="M0.2 17.6 L17.8 -0.2" stroke="#d6d6d6" stroke-width="1.1"/></g>
<g transform="translate(85.91,85.90)"><rect x="0.4" y="0.2" width="15.6" height="15.2" fill="#5ec795"/><g transform="translate(10.6,7.2)"><path d="M0 0 L0 10.4 L2.5 8.2 L4.3 12.2 L6 11.4 L4.3 7.6 L7.6 7.4 Z" fill="#fff" stroke="#3a4150" stroke-width="0.5"/></g></g>
<g transform="translate(4.40,113.10)"><rect x="-0.6" y="-0.4" width="18.4" height="18" fill="#3c4049"/><rect x="0.6" y="0.6" width="14.8" height="14.6" fill="none" stroke="#3fc25c" stroke-width="1.1" stroke-dasharray="2.6 1.2"/><g transform="translate(10.6,7.6)"><path d="M0 0 L0 10.4 L2.5 8.2 L4.3 12.2 L6 11.4 L4.3 7.6 L7.6 7.4 Z" fill="#fff" stroke="#3a4150" stroke-width="0.5"/></g></g>
<g transform="translate(31.57,113.10)"><rect x="0.2" y="0.2" width="12.6" height="14" fill="#e9e9e9"/><rect x="0.2" y="0.2" width="12.6" height="3" fill="#cfcfcf"/><path d="M1.4 5.6h3M5.4 5.6h6M1.4 8.2h3M5.4 8.2h6M1.4 10.8h3M5.4 10.8h3" stroke="#9a9a9a" stroke-width="1.1"/><rect x="8.8" y="9.2" width="4" height="4" fill="#3fb873"/><path d="M8.4 17.8 L17.6 8.6" stroke="#d6d6d6" stroke-width="1.1"/><rect x="14" y="14" width="3.6" height="3.6" fill="none" stroke="#2f9c6c" stroke-width="0.9" stroke-dasharray="1.2 0.8"/></g>
<g transform="translate(58.74,113.10)"><rect x="-0.6" y="-0.4" width="18.4" height="18" fill="#3c4049"/><rect x="0" y="0.2" width="11.6" height="4.2" fill="#8cc4f8"/><path d="M2.6 11.2 V7.4 H7.4" fill="none" stroke="#d8d8d8" stroke-width="1.3"/><path d="M6.6 5.2 L9.4 7.4 L6.6 9.6Z" fill="#d8d8d8"/><rect x="5.6" y="10.4" width="11.8" height="7" fill="none" stroke="#d8d8d8" stroke-width="1.2"/><path d="M5.6 13.9h11.8" stroke="#d8d8d8" stroke-width="1.1"/></g>
<g transform="translate(85.91,113.10)"><rect x="-0.6" y="-0.4" width="18.4" height="18" fill="#3c4049"/><rect x="5.6" y="0.6" width="11.8" height="7" fill="none" stroke="#d8d8d8" stroke-width="1.2"/><path d="M5.6 4.1h11.8" stroke="#d8d8d8" stroke-width="1.1"/><path d="M3 6.6 V11 H6.4" fill="none" stroke="#d8d8d8" stroke-width="1.3"/><path d="M5.8 8.8 L8.6 11 L5.8 13.2Z" fill="#d8d8d8"/><rect x="0" y="13.6" width="11.6" height="4.2" fill="#8cc4f8"/></g>
<g transform="translate(4.40,140.30)"><rect x="-0.6" y="-0.4" width="18.4" height="18" fill="#3c4049"/><rect x="0" y="-0.4" width="4.4" height="11.8" fill="#8cc4f8"/><path d="M12.4 5.4 V2.6 H7.4" fill="none" stroke="#d8d8d8" stroke-width="1.3"/><path d="M8.2 0.4 L5.4 2.6 L8.2 4.8Z" fill="#d8d8d8"/><path d="M9.6 18 V6 H17.4 V18 M13.5 6 V18" fill="none" stroke="#d8d8d8" stroke-width="1.2"/></g>
<g transform="translate(31.57,140.30)"><rect x="-0.6" y="-0.4" width="18.4" height="18" fill="#3c4049"/><rect x="13.4" y="-0.4" width="4.4" height="11.8" fill="#8cc4f8"/><path d="M5.4 5.4 V2.6 H10.4" fill="none" stroke="#d8d8d8" stroke-width="1.3"/><path d="M9.6 0.4 L12.4 2.6 L9.6 4.8Z" fill="#d8d8d8"/><path d="M0.4 18 V6 H8.2 V18 M4.3 6 V18" fill="none" stroke="#d8d8d8" stroke-width="1.2"/></g>
<g transform="translate(58.74,140.30)"><rect x="-0.6" y="-0.4" width="18.4" height="18" fill="#3c4049"/><path d="M0.6 18 V1.4 H9.4 V18 M5 1.4 V18" fill="none" stroke="#d8d8d8" stroke-width="1.2"/><rect x="9.6" y="4" width="4" height="14" fill="#8cc4f8"/><path d="M10.8 0 L17.4 6.2 M17.4 0 L10.8 6.2" stroke="#ea4a58" stroke-width="1.9"/></g>
<g transform="translate(85.91,140.30)"><rect x="0.8" y="1" width="15.8" height="13.4" fill="none" stroke="#cfcfcf" stroke-width="1.2"/><rect x="6" y="4.4" width="10.6" height="10" fill="#3f8fe0"/><rect x="8" y="4.4" width="3" height="10" fill="#5fc0f4"/><path d="M0.8 4.4h15.8M0.8 7.8h15.8M0.8 11.2h15.8M6 1v13.4M11.2 1v13.4" stroke="#cfcfcf" stroke-width="1" opacity="0.85"/></g>
<rect x="0.5" y="0.5" width="108.4" height="160.8" fill="none" stroke="#161c78" stroke-width="1.2"/>
</svg>
<div class="a" style="left:431.5px;top:323.6px;width:352.0px;height:260px;background:#fff;border-left:1px solid #8c8c8c;border-top:1px solid #a0a0a0;overflow:hidden">
<div class="a" style="left:0;top:0;width:22.5px;height:230.5px;background:#c8c8c8"></div>
<div class="a" style="left:0;top:0.0px;width:351.0px;height:17.6px;background:#c8c8c8"></div>
<svg class="a" style="left:5.5px;top:5.6px" width="11" height="7" viewBox="0 0 11 7"><path d="M1 1.2 L5.3 5.4 L9.6 1.2" fill="none" stroke="#333" stroke-width="1.25"/></svg>
<div class="t b" style="left:25.5px;top:1.2px">Display</div>
<div class="a" style="left:22.5px;top:32.7px;width:328.5px;height:1px;background:#c8c8c8"></div>
<div class="t" style="left:24.7px;top:18.5px;color:#000;font-size:11.8px">Name</div>
<div class="t" style="left:168.9px;top:18.5px;color:#000;font-size:11.9px">&amp;Yes</div>
<div class="a" style="left:0;top:33.7px;width:351.0px;height:16.7px;background:#c8c8c8"></div>
<svg class="a" style="left:5.5px;top:38.4px" width="11" height="7" viewBox="0 0 11 7"><path d="M1 1.2 L5.3 5.4 L9.6 1.2" fill="none" stroke="#333" stroke-width="1.25"/></svg>
<div class="t b" style="left:25.5px;top:34.0px">Command</div>
<div class="a" style="left:22.5px;top:65.5px;width:328.5px;height:1px;background:#c8c8c8"></div>
<div class="t" style="left:24.7px;top:51.3px;color:#000;font-size:11.8px">Command Name</div>
<div class="t" style="left:168.9px;top:51.3px;color:#000;font-size:11.9px">Viewports, Lock, Yes</div>
<div class="a" style="left:22.5px;top:81.9px;width:328.5px;height:1px;background:#c8c8c8"></div>
<div class="t" style="left:24.7px;top:67.7px;color:#000;font-size:11.8px">Description</div>
<div class="t" style="left:168.9px;top:67.7px;color:#000;font-size:11.9px">Locks the current viewport. This is</div>
<div class="a" style="left:22.5px;top:98.3px;width:328.5px;height:1px;background:#c8c8c8"></div>
<div class="t" style="left:24.7px;top:84.1px;color:#000;font-size:11.8px">Extended Help File</div>
<div class="t" style="left:168.9px;top:84.1px;color:#000;font-size:11.9px"></div>
<div class="a" style="left:22.5px;top:114.7px;width:328.5px;height:1px;background:#c8c8c8"></div>
<div class="t" style="left:24.7px;top:100.5px;color:#000;font-size:11.8px">Command Display Name</div>
<div class="t" style="left:168.9px;top:100.5px;color:#000;font-size:11.9px">-VPORTS</div>
<div class="a" style="left:22.5px;top:131.1px;width:328.5px;height:1px;background:#c8c8c8"></div>
<div class="t" style="left:24.7px;top:116.9px;color:#000;font-size:11.8px">Macro</div>
<div class="t" style="left:168.9px;top:116.9px;color:#000;font-size:11.9px">^C^C_-vports _lock _on _p;;</div>
<div class="a" style="left:22.5px;top:147.5px;width:328.5px;height:1px;background:#c8c8c8"></div>
<div class="t" style="left:24.7px;top:133.3px;color:#000;font-size:11.8px">Tags</div>
<div class="t" style="left:168.9px;top:133.3px;color:#000;font-size:11.9px"></div>
<div class="a" style="left:0;top:148.5px;width:351.0px;height:16.7px;background:#c8c8c8"></div>
<svg class="a" style="left:5.5px;top:153.2px" width="11" height="7" viewBox="0 0 11 7"><path d="M1 1.2 L5.3 5.4 L9.6 1.2" fill="none" stroke="#333" stroke-width="1.25"/></svg>
<div class="t b" style="left:25.5px;top:148.8px">Advanced</div>
<div class="a" style="left:22.5px;top:180.3px;width:328.5px;height:1px;background:#c8c8c8"></div>
<div class="t" style="left:24.7px;top:166.1px;color:#8c8c8c;font-size:11.8px">Element ID</div>
<div class="t" style="left:168.9px;top:166.1px;color:#8c8c8c;font-size:11.9px">ID_Vport_lockon</div>
<div class="a" style="left:0;top:181.3px;width:351.0px;height:16.7px;background:#c8c8c8"></div>
<svg class="a" style="left:5.5px;top:186.0px" width="11" height="7" viewBox="0 0 11 7"><path d="M1 1.2 L5.3 5.4 L9.6 1.2" fill="none" stroke="#333" stroke-width="1.25"/></svg>
<div class="t b" style="left:25.5px;top:181.6px">Images</div>
<div class="a" style="left:22.5px;top:213.1px;width:328.5px;height:1px;background:#c8c8c8"></div>
<div class="t" style="left:24.7px;top:198.9px;color:#000;font-size:11.8px">Small image</div>
<div class="t" style="left:168.9px;top:198.9px;color:#000;font-size:11.9px">RCDATA_16_VP_DISPLAY_LOCK</div>
<div class="a" style="left:22.5px;top:229.5px;width:328.5px;height:1px;background:#c8c8c8"></div>
<div class="t" style="left:24.7px;top:215.3px;color:#000;font-size:11.8px">Large image</div>
<div class="t" style="left:168.9px;top:215.3px;color:#000;font-size:11.9px">RCDATA_32_VP_DISPLAY_LOCK</div>
<div class="a" style="left:164.4px;top:0;width:1px;height:230.5px;background:#c8c8c8;mix-blend-mode:darken"></div>
</div>
<div class="a" style="left:433px;top:298px;width:22.2px;height:22.8px;background:#cce4f7;border:1px solid #a6d0f2"></div>
<svg class="a" style="left:435px;top:300.6px" width="19" height="19" viewBox="0 0 19 19">
<rect x="1.2" y="1.2" width="6.4" height="6.4" fill="#fff" stroke="#6f6f9a" stroke-width="0.9"/><rect x="3.1" y="3.1" width="2.6" height="2.6" fill="#222"/>
<rect x="1.2" y="10.8" width="6.4" height="6.4" fill="#fff" stroke="#6f6f9a" stroke-width="0.9"/><rect x="3.1" y="12.7" width="2.6" height="2.6" fill="#222"/>
<path d="M9.6 2.2h4M9.6 13h4" stroke="#555" stroke-width="1"/>
<path d="M9.6 4.8h7M9.6 7.2h7M9.6 9.6h7M9.6 15.4h7" stroke="#b9bcc4" stroke-width="1"/>
</svg>
<div class="t b" style="left:457.8px;top:299.8px;font:bold 11px 'Liberation Serif',serif;color:#2f52c8">A</div>
<div class="t b" style="left:458px;top:308.6px;font:bold 11px 'Liberation Serif',serif;color:#8c2a3c">Z</div>
<svg class="a" style="left:467px;top:300px" width="9" height="20" viewBox="0 0 9 20"><path d="M4.5 1.4V15" stroke="#111" stroke-width="1.3"/><path d="M1.6 13 L4.5 18 L7.4 13 Z" fill="#111"/></svg>
<div class="a" style="left:478.2px;top:299px;width:1.4px;height:22.4px;background:#a9a9a9"></div>
<svg class="a" style="left:484px;top:301.4px" width="19" height="17.4" viewBox="0 0 19 17.4">
<rect x="0.5" y="0.5" width="17.6" height="16" fill="#c9c9c9" stroke="#bdbdbd"/>
<rect x="0.5" y="0.5" width="17.6" height="2.6" fill="#b9b9b9"/>
<path d="M3.4 6.4 L7.6 6.4 L8.6 7.6 L14.4 7.6 L14.4 13.4 L3.4 13.4 Z" fill="#d4d4d4" stroke="#e2e2e2" stroke-width="0.9"/>
<path d="M5 9.4h1.4M5 11.4h1.4M8 11.4h4" stroke="#eee" stroke-width="0.9"/>
</svg>

<!-- panel borders (sub-pixel) -->
<svg class="a" style="left:0;top:0;pointer-events:none" width="800" height="564" viewBox="0 0 800 564">
<rect x="389.05" y="59.0" width="2.05" height="360.00" fill="#b3bbc7"/>
<rect x="1.0" y="416.95" width="390.10" height="2.05" fill="#b3bbc7"/>
<rect x="1.0" y="59.0" width="390.10" height="2.05" fill="#98a4b0"/>
<rect x="1.0" y="59.0" width="2.05" height="360.00" fill="#98a4b0"/>
<rect x="389.05" y="429.0" width="2.05" height="211.00" fill="#b3bbc7"/>
<rect x="1.0" y="637.95" width="390.10" height="2.05" fill="#b3bbc7"/>
<rect x="1.0" y="429.0" width="390.10" height="2.05" fill="#98a4b0"/>
<rect x="1.0" y="429.0" width="2.05" height="211.00" fill="#98a4b0"/>
<rect x="795.95" y="58.6" width="2.05" height="581.40" fill="#b3bbc7"/>
<rect x="416.4" y="637.95" width="381.60" height="2.05" fill="#b3bbc7"/>
<rect x="416.4" y="58.6" width="381.60" height="2.05" fill="#98a4b0"/>
<rect x="416.4" y="58.6" width="2.05" height="581.40" fill="#98a4b0"/>
<rect x="792.05" y="62.9" width="2.05" height="187.60" fill="#b3bbc7"/>
<rect x="420.8" y="248.45" width="373.30" height="2.05" fill="#b3bbc7"/>
<rect x="420.8" y="62.9" width="373.30" height="2.05" fill="#98a4b0"/>
<rect x="420.8" y="62.9" width="2.05" height="187.60" fill="#98a4b0"/>
<rect x="792.05" y="260.5" width="2.05" height="379.50" fill="#b3bbc7"/>
<rect x="420.8" y="637.95" width="373.30" height="2.05" fill="#b3bbc7"/>
<rect x="420.8" y="260.5" width="373.30" height="2.05" fill="#98a4b0"/>
<rect x="420.8" y="260.5" width="2.05" height="379.50" fill="#98a4b0"/>
<rect x="3.3" y="113.6" width="385.8" height="304" fill="none" stroke="#84888f" stroke-width="1"/>
<rect x="3.3" y="530.6" width="385.8" height="100" fill="none" stroke="#84888f" stroke-width="1"/>
</svg>
</body></html>
